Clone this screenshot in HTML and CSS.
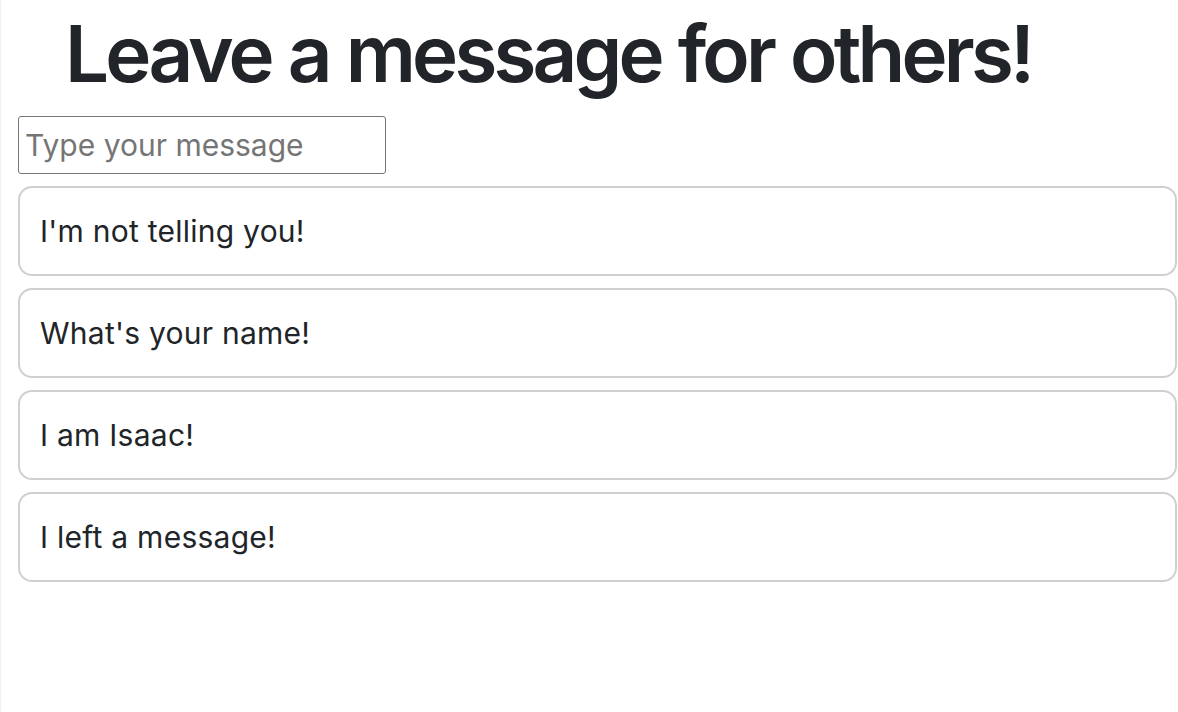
FILE: index.html
```html
<!DOCTYPE html>
<html lang="en">
<head>
<meta charset="utf-8">
<title>Message board</title>
<link rel="stylesheet" href="styles.css">
</head>
<body>
<main class="page">
  <h1 class="title">Leave a message for others!</h1>
  <input class="message-input" type="text" placeholder="Type your message">
  <ul class="messages">
    <li class="message">I'm not telling you!</li>
    <li class="message">What's your name!</li>
    <li class="message">I am Isaac!</li>
    <li class="message">I left a message!</li>
  </ul>
</main>
</body>
</html>
```
FILE: styles.css
```css
html, body {
  margin: 0;
  padding: 0;
  background: #fff;
}
body {
  font-family: Inter, "Helvetica Neue", Arial, sans-serif;
  color: #212529;
  border-left: 1px solid #f0f0f0;
  min-height: 712px;
  box-sizing: border-box;
}
.page {
  padding: 0 1px 0 17px;
  display: flex;
  flex-direction: column;
}
.title {
  margin: 7px 0 0 47px;
  font-size: 78px;
  font-weight: 600;
  line-height: 94px;
  letter-spacing: -3.8px;
  word-spacing: 1px;
}
.message-input {
  margin-top: 15px;
  width: 368px;
  height: 58px;
  box-sizing: border-box;
  border: 1px solid #767676;
  border-radius: 3px;
  padding: 0 6px;
  font-family: Inter, "Helvetica Neue", Arial, sans-serif;
  font-size: 30px;
  color: #212529;
}
.message-input::placeholder {
  color: #757575;
}
.messages {
  list-style: none;
  margin: 12px 0 0;
  padding: 0;
  display: flex;
  flex-direction: column;
  gap: 12px;
}
.message {
  height: 90px;
  box-sizing: border-box;
  border: 2px solid #d0d0d0;
  border-radius: 14px;
  padding: 0 20px;
  display: flex;
  align-items: center;
  font-size: 30px;
  letter-spacing: 0.25px;
}
```
